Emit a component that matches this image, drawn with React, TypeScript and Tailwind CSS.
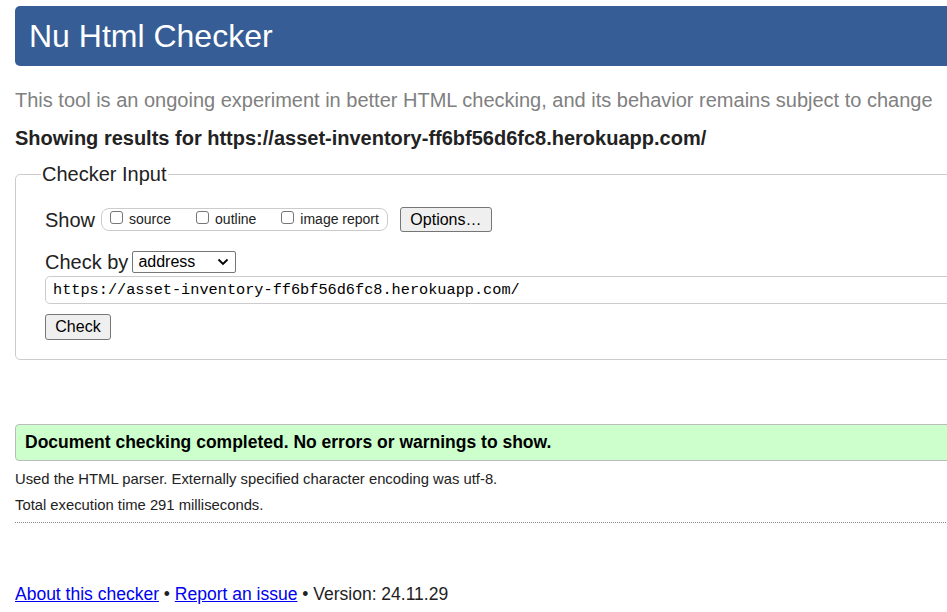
export default function App() {
  return (
    <div className="relative h-[612px] w-[947px] overflow-hidden bg-white font-['Liberation_Sans',Arial,sans-serif] text-[#111]">
      <div className="w-[1100px] pl-[15px]">
        <h1 className="mt-[6px] flex h-[60px] items-center rounded-[5px] bg-[#365d95] pl-[14px] text-[32px] leading-none text-white">
          Nu Html Checker
        </h1>
        <p className="mt-[22px] text-[20px] leading-[24px] text-[#808080]">
          This tool is an ongoing experiment in better HTML checking, and its behavior remains subject to change
        </p>
        <p className="mt-[14px] text-[20px] font-bold leading-[24px] text-[#222]">
          Showing results for https://asset-inventory-ff6bf56d6fc8.herokuapp.com/
        </p>

        <fieldset className="mt-[13px] rounded-[5px] border border-[#ccc] pb-[19px] pl-[29px] pr-[10px]">
          <legend className="ml-[-4px] px-[1px] text-[20px] leading-[22px] text-[#222]">Checker Input</legend>
          <div className="mt-[22px] flex h-[25px] items-center">
            <span className="text-[20px] leading-[24px] text-[#222]">Show</span>
            <div className="ml-[6px] flex h-[23px] items-center rounded-[8px] border border-[#ccc] pl-[8px] pr-[8px] text-[14px] text-[#222]">
              <label className="flex items-center">
                <span className="mt-[-5px] inline-block h-[13px] w-[13px] rounded-[3px] border border-[#767676] bg-white" />
                <span className="ml-[6px]">source</span>
              </label>
              <label className="ml-[25px] flex items-center">
                <span className="mt-[-5px] inline-block h-[13px] w-[13px] rounded-[3px] border border-[#767676] bg-white" />
                <span className="ml-[6px]">outline</span>
              </label>
              <label className="ml-[25px] flex items-center">
                <span className="mt-[-5px] inline-block h-[13px] w-[13px] rounded-[3px] border border-[#767676] bg-white" />
                <span className="ml-[6px]">image report</span>
              </label>
            </div>
            <button className="ml-[12px] h-[25px] w-[92px] rounded-[3px] border border-[#767676] bg-[#efefef] text-[16px] leading-none text-black">
              Options…
            </button>
          </div>
          <div className="mt-[19px] flex h-[22px] items-center">
            <span className="text-[20px] leading-[24px] text-[#222]">Check by</span>
            <div className="ml-[4px] flex h-[22px] w-[104px] items-center justify-between rounded-[2px] border border-[#767676] bg-white pl-[5px] pr-[6px] text-[16px] leading-none text-black">
              <span>address</span>
              <svg width="12" height="8" viewBox="0 0 12 8" fill="none">
                <path d="M1.5 1.5 L6 6 L10.5 1.5" stroke="#000" strokeWidth="1.8" />
              </svg>
            </div>
          </div>
          <div className="mt-[3px] flex h-[28px] w-[1060px] items-center rounded-[5px] border border-[#ccc] pl-[7px] font-['Liberation_Mono',monospace] text-[15.25px] text-black">
            https://asset-inventory-ff6bf56d6fc8.herokuapp.com/
          </div>
          <button className="mt-[10px] block h-[26px] w-[66px] rounded-[3px] border border-[#767676] bg-[#efefef] text-[16px] leading-none text-black">
            Check
          </button>
        </fieldset>

        <div className="mt-[64px] flex h-[37px] items-center rounded-[4px] border border-[#bbb] bg-[#ccffcc] pl-[9px] text-[17.5px] font-bold text-black">
          Document checking completed. No errors or warnings to show.
        </div>
        <p className="mt-[9px] text-[14.8px] leading-[18px] text-[#222]">
          Used the HTML parser. Externally specified character encoding was utf-8.
        </p>
        <p className="mt-[8px] text-[14.8px] leading-[18px] text-[#222]">Total execution time 291 milliseconds.</p>
        <div className="mt-[8px] border-t border-dotted border-[#888]" />

        <p className="mt-[60px] text-[17.5px] leading-[22px] text-[#222]">
          <a href="#" className="text-[#0000ee] underline">About this checker</a>
          {" • "}
          <a href="#" className="text-[#0000ee] underline">Report an issue</a>
          {" • Version: 24.11.29"}
        </p>
      </div>
    </div>
  );
}
